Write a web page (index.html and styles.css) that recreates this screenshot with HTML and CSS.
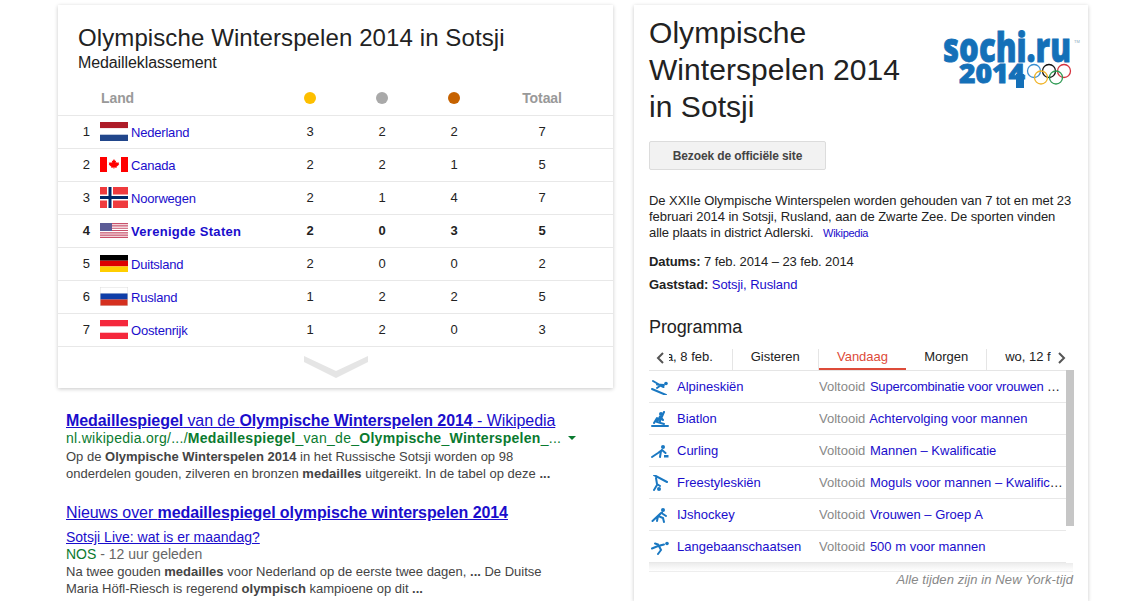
FILE: index.html
```html
<!DOCTYPE html>
<html lang="nl">
<head>
<meta charset="utf-8">
<title>Olympische Winterspelen 2014 in Sotsji</title>
<link rel="stylesheet" href="styles.css">
</head>
<body>
<div class="page">
  <div class="left">
    <section class="card medals">
      <h1 class="m-title">Olympische Winterspelen 2014 in Sotsji</h1>
      <div class="m-sub">Medailleklassement</div>
      <div class="row head">
        <span></span><span class="land">Land</span>
        <span class="c"><i class="dot gold"></i></span>
        <span class="c"><i class="dot silver"></i></span>
        <span class="c"><i class="dot bronze"></i></span>
        <span class="c">Totaal</span>
      </div>
      <div class="row">
        <span class="rank">1</span>
        <span class="country"><svg class="flag" viewBox="0 0 28 19"><rect width="28" height="6.300" fill="#ae1c28"/><rect y="6.300" width="28" height="6.400" fill="#fff"/><rect y="12.700" width="28" height="6.300" fill="#21468b"/></svg><a>Nederland</a></span>
        <span class="c">3</span><span class="c">2</span><span class="c">2</span><span class="c">7</span>
      </div>
      <div class="row">
        <span class="rank">2</span>
        <span class="country"><svg class="flag" viewBox="0 0 28 15"><rect width="28" height="15" fill="#fff"/><rect width="7" height="15" fill="#f00"/><rect x="21" width="7" height="15" fill="#f00"/><path d="M14 2l1.100 2 1-.5-.4 2.500 1.300-1 .4.800 1.700-.3-.5 1.700.7.400-2.800 2.200.3 1-2.600-.3V12h-.5v-1.500l-2.600.3.3-1-2.800-2.200.7-.4-.5-1.700 1.700.3.400-.8 1.300 1-.4-2.500 1 .5z" fill="#f00"/></svg><a>Canada</a></span>
        <span class="c">2</span><span class="c">2</span><span class="c">1</span><span class="c">5</span>
      </div>
      <div class="row">
        <span class="rank">3</span>
        <span class="country"><svg class="flag" viewBox="0 0 28 21"><rect width="28" height="21" fill="#ef3a3d"/><rect x="7" width="6" height="21" fill="#fff"/><rect y="7.500" width="28" height="6" fill="#fff"/><rect x="8.500" width="3" height="21" fill="#002868"/><rect y="9" width="28" height="3" fill="#002868"/></svg><a>Noorwegen</a></span>
        <span class="c">2</span><span class="c">1</span><span class="c">4</span><span class="c">7</span>
      </div>
      <div class="row strong">
        <span class="rank">4</span>
        <span class="country"><svg class="flag" viewBox="0 0 28 15"><rect width="28" height="15" fill="#fff"/><path d="M0 .6h28M0 2.900h28M0 5.200h28M0 7.500h28M0 9.800h28M0 12.100h28M0 14.400h28" stroke="#c8506a" stroke-width="1.150"/><rect width="12" height="8" fill="#5c5c96"/></svg><a>Verenigde Staten</a></span>
        <span class="c">2</span><span class="c">0</span><span class="c">3</span><span class="c">5</span>
      </div>
      <div class="row">
        <span class="rank">5</span>
        <span class="country"><svg class="flag" viewBox="0 0 28 17"><rect width="28" height="5.700" fill="#000"/><rect y="5.700" width="28" height="5.700" fill="#d00"/><rect y="11.400" width="28" height="5.600" fill="#ffce00"/></svg><a>Duitsland</a></span>
        <span class="c">2</span><span class="c">0</span><span class="c">0</span><span class="c">2</span>
      </div>
      <div class="row">
        <span class="rank">6</span>
        <span class="country"><svg class="flag" viewBox="0 0 28 19"><rect width="28" height="19" fill="#ddd"/><rect x=".5" y=".5" width="27" height="6" fill="#fff"/><rect x=".5" y="6.500" width="27" height="6" fill="#0f3ea8"/><rect x=".5" y="12.500" width="27" height="6" fill="#d5301f"/></svg><a>Rusland</a></span>
        <span class="c">1</span><span class="c">2</span><span class="c">2</span><span class="c">5</span>
      </div>
      <div class="row">
        <span class="rank">7</span>
        <span class="country"><svg class="flag" viewBox="0 0 28 19"><rect width="28" height="19" fill="#f5283c"/><rect y="6.300" width="28" height="6.400" fill="#fff"/></svg><a>Oostenrijk</a></span>
        <span class="c">1</span><span class="c">2</span><span class="c">0</span><span class="c">3</span>
      </div>
      <div class="more"><svg class="chev" viewBox="0 0 64 22"><path d="M0 0L32 15 64 0V6L32 22 0 6z" fill="#e5e5e5"/></svg></div>
    </section>

    <div class="results">
      <div class="res">
        <a class="r-title"><b>Medaillespiegel</b> van de <b>Olympische Winterspelen 2014</b> - Wikipedia</a>
        <div class="r-url">nl.wikipedia.org/.../<b>Medaillespiegel</b>_van_de_<b>Olympische</b>_<b>Winterspelen</b>_... <i class="caret"></i></div>
        <p class="r-text">Op de <b>Olympische Winterspelen 2014</b> in het Russische Sotsji worden op 98<br>onderdelen gouden, zilveren en bronzen <b>medailles</b> uitgereikt. In de tabel op deze <b>...</b></p>
      </div>
      <div class="res news">
        <a class="r-title">Nieuws over <b>medaillespiegel olympische winterspelen 2014</b></a>
        <a class="n-link">Sotsji Live: wat is er maandag?</a>
        <div class="n-src"><span class="green">NOS</span> - 12 uur geleden</div>
        <p class="r-text">Na twee gouden <b>medailles</b> voor Nederland op de eerste twee dagen, <b>...</b> De Duitse<br>Maria Höfl-Riesch is regerend <b>olympisch</b> kampioene op dit <b>...</b></p>
      </div>
    </div>
  </div>

  <section class="card info">
    <div class="i-head">
      <h2 class="i-title">Olympische Winterspelen 2014 in Sotsji</h2>
      <svg class="logo" viewBox="0 0 140 60">
        <text class="lt" x="0" y="28" textLength="128" lengthAdjust="spacingAndGlyphs">sochi.ru</text>
        <text class="lt two" x="16" y="49" textLength="66" lengthAdjust="spacingAndGlyphs">2014</text>
        <rect class="leg" x="73" y="40" width="8" height="14"/>
        <text class="tm" x="131" y="9">TM</text>
        <g fill="none" stroke-width="1.300">
          <circle cx="91" cy="37" r="6.500" stroke="#3b8fd0"/>
          <circle cx="106" cy="37" r="6.500" stroke="#111"/>
          <circle cx="121" cy="37" r="6.500" stroke="#d6333f"/>
          <circle cx="98" cy="43.500" r="6.500" stroke="#f0b429"/>
          <circle cx="113" cy="43.500" r="6.500" stroke="#2f9a54"/>
        </g>
      </svg>
    </div>
    <a class="btn">Bezoek de officiële site</a>
    <p class="desc">De XXIIe Olympische Winterspelen worden gehouden van 7 tot en met 23 februari 2014 in Sotsji, Rusland, aan de Zwarte Zee. De sporten vinden alle plaats in district Adlerski. <a class="wiki">Wikipedia</a></p>
    <div class="fact"><b>Datums:</b> 7 feb. 2014 – 23 feb. 2014</div>
    <div class="fact"><b>Gaststad:</b> <a>Sotsji, Rusland</a></div>
    <h3 class="prog">Programma</h3>
    <div class="tabs">
      <svg class="arrow" viewBox="0 0 8 12"><path d="M7 1L2 6l5 5" fill="none" stroke="#555" stroke-width="2"/></svg>
      <div class="tab t1"><span>za, 8 feb.</span></div>
      <div class="tab t2">Gisteren</div>
      <div class="tab t3">Vandaag</div>
      <div class="tab t4">Morgen</div>
      <div class="tab t5"><span>wo, 12 feb.</span></div>
      <svg class="arrow" viewBox="0 0 8 12"><path d="M1 1l5 5-5 5" fill="none" stroke="#555" stroke-width="2"/></svg>
    </div>
    <div class="sched">
      <div class="list">
        <div class="ev">
          <svg class="ic" viewBox="0 0 18 16"><circle cx="15" cy="4.500" r="1.800" class="f"/><path class="s" d="M6 5.500l7 .5M9.500 6.500L6 9M9.500 6.500l3 1.500M1 10l14 6M2 2l6 3.500"/></svg>
          <a class="sport">Alpineskiën</a>
          <span class="st"><span class="gr">Voltooid</span> <a class="tight">Supercombinatie voor vrouwen</a> …</span>
        </div>
        <div class="ev">
          <svg class="ic" viewBox="0 0 18 16"><circle cx="10" cy="3" r="2" class="f"/><path class="s" d="M9 5.500L6 11l7 2M9 5.500l3 3.500M13 1L9 10M6 7L3 12M1 15h16"/></svg>
          <a class="sport">Biatlon</a>
          <span class="st"><span class="gr">Voltooid</span> <a>Achtervolging voor mannen</a></span>
        </div>
        <div class="ev">
          <svg class="ic" viewBox="0 0 18 16"><circle cx="12" cy="4" r="2" class="f"/><path class="s" d="M11 7L7 10 1 14M11 7l3.500 3M10 8l-1 6"/><path class="f" d="M13 12h4.500v2.500H13z"/></svg>
          <a class="sport">Curling</a>
          <span class="st"><span class="gr">Voltooid</span> <a>Mannen – Kwalificatie</a></span>
        </div>
        <div class="ev">
          <svg class="ic" viewBox="0 0 18 16"><circle cx="8" cy="14" r="2" class="f"/><path class="s" d="M3 0l13 7M5 3l1 6M6 9l3 2M6 10l-3 5"/></svg>
          <a class="sport">Freestyleskiën</a>
          <span class="st"><span class="gr">Voltooid</span> <a>Moguls voor mannen – Kwalificatie</a></span>
        </div>
        <div class="ev">
          <svg class="ic" viewBox="0 0 18 16"><circle cx="12" cy="3" r="2" class="f"/><path class="s" d="M11 5.500L7 9l5 2 1 4M7 9l-1 5M10 6L1.500 14M12 7l3 2"/></svg>
          <a class="sport">IJshockey</a>
          <span class="st"><span class="gr">Voltooid</span> <a>Vrouwen – Groep A</a></span>
        </div>
        <div class="ev">
          <svg class="ic" viewBox="0 0 18 16"><circle cx="16" cy="4.500" r="1.800" class="f"/><path class="s" d="M13 5.500L7 7 1 9.500M8 7l2 4-3 4M7 5.500L4 4.500"/></svg>
          <a class="sport">Langebaanschaatsen</a>
          <span class="st"><span class="gr">Voltooid</span> <a>500 m voor mannen</a></span>
        </div>
      </div>
      <div class="thumb"></div>
    </div>
    <div class="fade"></div>
    <div class="tz">Alle tijden zijn in New York-tijd</div>
  </section>
</div>
</body>
</html>
```
FILE: styles.css
```css
* { box-sizing: border-box; }
html, body { margin: 0; height: 601px; overflow: hidden; background: #fff; }
body { font-family: "Liberation Sans", Arial, sans-serif; font-size: 13px; color: #222; }
a { color: #1a0dcc; }
b { font-weight: 700; }
h1, h2, h3, p { margin: 0; font-weight: 400; }

.page { display: flex; gap: 21px; padding: 5px 0 0 58px; align-items: flex-start; height: 601px; }
.left { width: 555px; flex: none; }
.card { background: #fff; box-shadow: 0 1px 4px rgba(0,0,0,.22); }

.medals { height: 383px; padding-top: 19px; }
.m-title { font-size: 24px; line-height: 28px; padding-left: 20px; letter-spacing: .1px; }
.m-sub { font-size: 16px; line-height: 20px; padding-left: 20px; margin-top: 1px; letter-spacing: -.1px; }
.row { display: grid; grid-template-columns: 42px 174px 72px 72px 72px 104px 19px; height: 33px; align-items: center; border-bottom: 1px solid #e8e8e8; padding-bottom: 1px; }
.row .c { text-align: center; }
.row.head { margin-top: 9px; height: 34px; padding-bottom: 1px; color: #999; font-weight: 700; font-size: 14px; letter-spacing: -.1px; }
.land { padding-left: 1px; }
.dot { display: block; width: 12px; height: 12px; border-radius: 50%; margin: 0 auto; }
.gold { background: #fdbf00; }
.silver { background: #a9a9a9; }
.bronze { background: #c66200; }
.rank { text-align: right; padding-right: 10px; }
.country { display: flex; align-items: center; gap: 3px; }
.country a { position: relative; top: 1px; letter-spacing: -.2px; }
.flag { width: 28px; height: auto; display: block; flex: none; }
.strong { font-weight: 700; }
.strong .country a { letter-spacing: .3px; }
.more { display: flex; justify-content: center; padding-top: 9px; }
.chev { width: 64px; height: 22px; display: block; }

.results { padding: 24px 0 0 8px; }
.res { margin-bottom: 22px; }
.r-title { display: block; font-size: 16px; line-height: 18px; text-decoration: underline; color: #1a0dcc; letter-spacing: -.08px; }
.r-url { font-size: 14px; line-height: 16px; color: #0a7a2f; margin-bottom: 2px; letter-spacing: .28px; }
.caret { display: inline-block; border: 4px solid transparent; border-top: 4px solid #0a7a2f; border-bottom: 0; vertical-align: 3px; margin-left: 3px; }
.r-text { font-size: 13px; line-height: 17px; color: #444; }
.n-link { display: block; font-size: 14px; line-height: 16px; text-decoration: underline; margin-top: 7px; }
.n-src { font-size: 14px; line-height: 17px; color: #666; margin-top: 1px; }
.green { color: #0a7a2f; }

.info { width: 454px; flex: none; height: 596px; padding: 9px 15px 0; }
.i-head { display: flex; justify-content: space-between; align-items: flex-start; }
.i-title { font-size: 30px; line-height: 37px; width: 270px; letter-spacing: .05px; }
.logo { width: 140px; height: 60px; margin-top: 20px; margin-right: -10px; flex: none; display: block; overflow: visible; }
.lt { font-family: "Open Sans", sans-serif; font-weight: 800; font-size: 40px; fill: #1470b8; stroke: #1470b8; stroke-width: .8px; }
.lt.two { font-size: 26px; }
.leg { fill: #1470b8; }
.tm { font-size: 4px; fill: #8ab; }
.btn { display: flex; align-items: center; justify-content: center; width: 177px; height: 29px; margin-top: 16px; border: 1px solid #dcdcdc; border-radius: 2px; background: #f2f2f2; color: #444; font-size: 12px; font-weight: 700; letter-spacing: -.1px; }
.desc { font-size: 13px; line-height: 16px; margin-top: 23px; letter-spacing: -.05px; }
.wiki { font-size: 11px; letter-spacing: -.3px; margin-left: 6px; }
.fact { font-size: 13px; line-height: 16px; margin-top: 7px; letter-spacing: -.08px; }
.desc + .fact { margin-top: 13px; }
.prog { font-size: 18px; line-height: 22px; margin-top: 23px; letter-spacing: -.1px; }
.tabs { display: flex; align-items: center; height: 26px; margin-top: 7px; border-bottom: 1px solid #e5e5e5; padding: 0 7px; }
.arrow { width: 8px; height: 12px; flex: none; }
.tab { height: 21px; align-self: flex-end; display: flex; align-items: center; justify-content: center; font-size: 13px; white-space: nowrap; overflow: hidden; border-right: 1px solid #e5e5e5; padding-bottom: 6px; }
.t1 { width: 64px; margin-left: 5px; justify-content: flex-end; padding-right: 19px; }
.t2 { width: 86px; }
.t3 { width: 88px; color: #dd4b39; box-shadow: inset 0 -2px 0 #dd4b39; border-right: 0; }
.t4 { width: 81px; }
.t5 { width: 64px; margin-right: 7px; border-right: 0; justify-content: flex-start; padding-left: 18px; }
.t5 span { flex: none; }
.sched { display: flex; height: 192px; }
.list { width: 417px; flex: none; }
.ev { display: flex; align-items: center; height: 32px; border-bottom: 1px solid #e8e8e8; font-size: 13px; }
.ic { width: 18px; height: 16px; margin: 0 8px 0 2px; flex: none; }
.ic .f { fill: #1a78c2; }
.ic .s { fill: none; stroke: #1a78c2; stroke-width: 2; stroke-linecap: round; }
.sport { width: 142px; flex: none; }
.st { white-space: nowrap; overflow: hidden; text-overflow: ellipsis; flex: 1; min-width: 0; padding-right: 1px; }
.gr { color: #888; margin-right: 1px; }
.tight { letter-spacing: -.2px; }
.thumb { width: 8px; height: 156px; margin-top: -1px; background: #c6c6c6; flex: none; }
.fade { height: 9px; background: linear-gradient(#ececec, #fff); border-bottom: 1px solid #eee; }
.tz { font-size: 13px; font-style: italic; color: #888; text-align: right; line-height: 14px; margin-top: 1px; letter-spacing: .1px; }
```
